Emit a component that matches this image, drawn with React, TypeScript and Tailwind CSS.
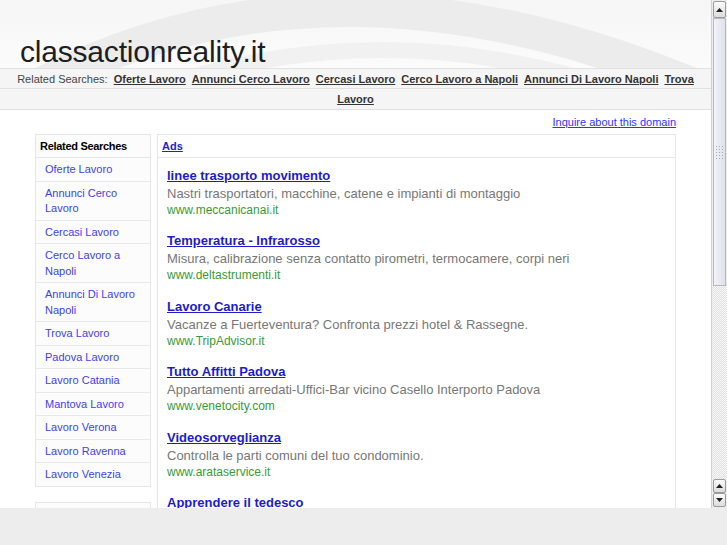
import React from 'react';

const SIDE_LINKS = [
  'Oferte Lavoro',
  'Annunci Cerco Lavoro',
  'Cercasi Lavoro',
  'Cerco Lavoro a Napoli',
  'Annunci Di Lavoro Napoli',
  'Trova Lavoro',
  'Padova Lavoro',
  'Lavoro Catania',
  'Mantova Lavoro',
  'Lavoro Verona',
  'Lavoro Ravenna',
  'Lavoro Venezia',
];

const TOP_LINKS = [
  'Oferte Lavoro',
  'Annunci Cerco Lavoro',
  'Cercasi Lavoro',
  'Cerco Lavoro a Napoli',
  'Annunci Di Lavoro Napoli',
  'Trova',
];

const ADS = [
  {
    title: 'linee trasporto movimento',
    desc: 'Nastri trasportatori, macchine, catene e impianti di montaggio',
    url: 'www.meccanicanai.it',
  },
  {
    title: 'Temperatura - Infrarosso',
    desc: 'Misura, calibrazione senza contatto pirometri, termocamere, corpi neri',
    url: 'www.deltastrumenti.it',
  },
  {
    title: 'Lavoro Canarie',
    desc: 'Vacanze a Fuerteventura? Confronta prezzi hotel & Rassegne.',
    url: 'www.TripAdvisor.it',
  },
  {
    title: 'Tutto Affitti Padova',
    desc: 'Appartamenti arredati-Uffici-Bar vicino Casello Interporto Padova',
    url: 'www.venetocity.com',
  },
  {
    title: 'Videosorveglianza',
    desc: 'Controlla le parti comuni del tuo condominio.',
    url: 'www.arataservice.it',
  },
  {
    title: 'Apprendere il tedesco',
    desc: '',
    url: '',
  },
];

function Arrow({ down = false }: { down?: boolean }) {
  return (
    <svg width="7" height="4" viewBox="0 0 7 4">
      {down ? <path d="M0 0h7L3.5 4z" fill="#222" /> : <path d="M0 4h7L3.5 0z" fill="#222" />}
    </svg>
  );
}

function Scrollbar() {
  return (
    <div className="w-[16px] flex flex-col bg-[#ececec] border-l border-[#d0d0d0]">
      <div className="h-[17px] mx-[1px] mt-[1px] rounded-[2px] border border-[#9a9a9a] bg-gradient-to-b from-[#fbfbfb] to-[#dcdcdc] flex items-center justify-center">
        <Arrow />
      </div>
      <div className="h-[268px] mx-[1px] border border-[#b8b8c0] bg-gradient-to-r from-[#f2f3f8] to-[#dfe1ea] flex items-center justify-center">
        <div className="w-[9px] h-[15px] bg-[radial-gradient(#a8a8b0_0.7px,transparent_0.8px)] bg-[length:3px_3px]" />
      </div>
      <div className="flex-1 bg-[repeating-conic-gradient(#e2e2e2_0_25%,#f6f6f6_0_50%)] bg-[length:2px_2px]" />
      <div className="h-[14px] mx-[1px] rounded-[2px] border border-[#9a9a9a] bg-gradient-to-b from-[#fbfbfb] to-[#dcdcdc] flex items-center justify-center">
        <Arrow />
      </div>
      <div className="h-[14px] mx-[1px] mb-[1px] rounded-[2px] border border-[#9a9a9a] bg-gradient-to-b from-[#fbfbfb] to-[#dcdcdc] flex items-center justify-center">
        <Arrow down />
      </div>
    </div>
  );
}

export default function App() {
  return (
    <div className="w-[727px] h-[545px] flex flex-col overflow-hidden bg-[#ededed] font-['Liberation_Sans',Arial,sans-serif]">
      <div className="flex h-[508px]">
        <div className="flex-1 bg-white overflow-hidden">
          {/* header with swoosh */}
          <header className="relative h-[69px] border-b border-[#e2e2e2] bg-gradient-to-b from-[#f6f6f6] to-[#fbfbfb] overflow-hidden">
            <svg className="absolute inset-0" width="711" height="69" viewBox="0 0 711 69">
              <path d="M30 90 Q 330 -70 705 90" fill="none" stroke="#ececec" strokeWidth="34" />
              <path d="M150 90 Q 380 10 620 90" fill="none" stroke="#f1f1f1" strokeWidth="16" />
            </svg>
            <h1 className="relative pl-[20px] pt-[37px] text-[30px] leading-[29px] text-[#1e1e1e] tracking-[-0.2px]">
              classactionreality.it
            </h1>
          </header>

          {/* related searches bar */}
          <nav className="text-[11px] bg-[#f5f5f5] text-[#333]">
            <div className="h-[20px] leading-[20px] border-b border-[#e0e0e0] flex justify-center gap-[6px]">
              <span className="text-[#444]">Related Searches:</span>
              {TOP_LINKS.map((l) => (
                <a key={l} className="font-bold underline">
                  {l}
                </a>
              ))}
            </div>
            <div className="h-[21px] leading-[21px] border-b border-[#e0e0e0] flex justify-center">
              <a className="font-bold underline">Lavoro</a>
            </div>
          </nav>

          <div className="w-[641px] mx-auto">
            <div className="h-[24px] pt-[4px] leading-[16px] text-[11px] text-right">
              <a className="text-[#3333ff] underline">Inquire about this domain</a>
            </div>

            <div className="flex gap-[6px] items-start">
              <aside className="w-[116px] shrink-0">
                <div className="border border-[#e6e6e6] bg-[#fcfcfc]">
                  <div className="h-[23px] leading-[22px] pl-[4px] border-b border-[#e6e6e6] text-[11px] font-bold text-black tracking-[-0.3px]">
                    Related Searches
                  </div>
                  {SIDE_LINKS.map((l, i) => (
                    <div
                      key={l}
                      className={`pl-[9px] pr-[4px] pt-[4px] pb-[3px] leading-[15.5px] text-[11px] ${i < SIDE_LINKS.length - 1 ? 'border-b border-[#e8e8e8]' : ''}`}
                    >
                      <a className="text-[#3f3fee]">{l}</a>
                    </div>
                  ))}
                </div>
                <div className="mt-[15px] h-[80px] border border-[#e6e6e6] bg-[#fcfcfc]" />
              </aside>

              <main className="flex-1 border border-[#e6e6e6] bg-white h-[400px]">
                <div className="h-[23px] leading-[22px] pl-[4px] border-b border-[#e6e6e6] text-[11px]">
                  <a className="font-bold underline text-[#2222cc]">Ads</a>
                </div>
                <div className="pl-[9px] pt-[9px]">
                  {ADS.map((ad) => (
                    <div key={ad.title} className="mb-[13.4px]">
                      <div className="text-[13px] leading-[18px] font-bold">
                        <a className="text-[#1c1ccc] underline">{ad.title}</a>
                      </div>
                      {ad.desc && <div className="text-[13px] leading-[17px] text-[#777]">{ad.desc}</div>}
                      {ad.url && <div className="text-[12px] leading-[17px] text-[#3a9a3a]">{ad.url}</div>}
                    </div>
                  ))}
                </div>
              </main>
            </div>
          </div>
        </div>
        <Scrollbar />
      </div>
      <div className="h-[37px] bg-[#ededed]" />
    </div>
  );
}
